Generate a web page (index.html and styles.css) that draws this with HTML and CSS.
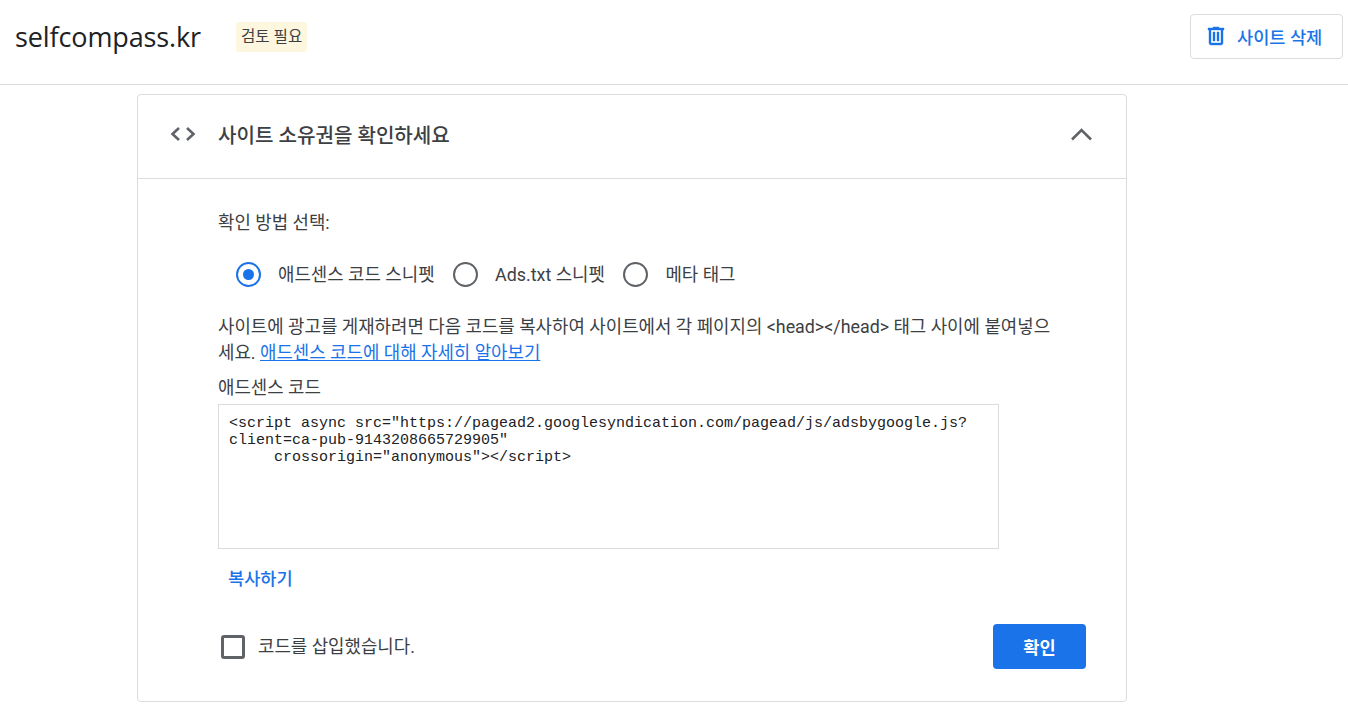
FILE: index.html
```html
<!DOCTYPE html>
<html lang="ko">
<head>
<meta charset="utf-8">
<title>selfcompass.kr</title>
<link rel="stylesheet" href="styles.css">
</head>
<body>
<header class="topbar">
  <div class="site-name">selfcompass.kr</div>
  <div class="status">검토 필요</div>
  <button class="delete-btn">
    <svg class="trash" viewBox="0 0 24 24" width="24" height="24"><path fill="#1a73e8" stroke="#1a73e8" stroke-width=".4" d="M15 4V3H9v1H4v2h1v13c0 1.1.9 2 2 2h10c1.1 0 2-.9 2-2V6h1V4h-5zm2 15H7V6h10v13zM9 8h2v9H9V8zm4 0h2v9h-2V8z"/></svg>
    <span>사이트 삭제</span>
  </button>
</header>
<main class="card">
  <div class="card-head">
    <svg class="code-icon" viewBox="0 0 28 16" width="28" height="16"><path fill="none" stroke="#5f6368" stroke-width="2.6" d="M10 2 3.500 8l6.500 6M18 2l6.500 6-6.500 6"/></svg>
    <h2 class="card-title">사이트 소유권을 확인하세요</h2>
    <svg class="chevron" viewBox="0 0 24 14" width="24" height="14"><path fill="none" stroke="#5f6368" stroke-width="2.600" d="M2 12.500 11.500 3l9.500 9.500"/></svg>
  </div>
  <div class="card-body">
    <p class="method-label">확인 방법 선택:</p>
    <div class="radios">
      <label class="radio"><span class="dot on"></span><span class="option-text">애드센스 코드 스니펫</span></label>
      <label class="radio"><span class="dot"></span><span class="option-text">Ads.txt 스니펫</span></label>
      <label class="radio"><span class="dot"></span><span class="option-text">메타 태그</span></label>
    </div>
    <p class="desc">사이트에 광고를 게재하려면 다음 코드를 복사하여 사이트에서 각 페이지의 &lt;head&gt;&lt;/head&gt; 태그 사이에 붙여넣으세요. <a href="#" class="link">애드센스 코드에 대해 자세히 알아보기</a></p>
    <div class="code-label">애드센스 코드</div>
    <pre class="code">&lt;script async src="https://pagead2.googlesyndication.com/pagead/js/adsbygoogle.js?
client=ca-pub-9143208665729905"
     crossorigin="anonymous"&gt;&lt;/script&gt;</pre>
    <button class="copy">복사하기</button>
    <div class="confirm-row">
      <label class="check"><span class="box"></span><span class="check-text">코드를 삽입했습니다.</span></label>
      <button class="confirm">확인</button>
    </div>
  </div>
</main>
</body>
</html>
```
FILE: styles.css
```css
* { box-sizing: border-box; }
html, body { margin: 0; height: 710px; overflow: hidden; background: #fff; }
body { font-family: Roboto, "Noto Sans CJK KR", sans-serif; color: #3c4043; }
.topbar { display: flex; align-items: center; height: 85px; border-bottom: 1px solid #dadce0; padding: 0 5px 11px 15px; }
.site-name { font-family: "Open Sans", Roboto, sans-serif; font-size: 27px; letter-spacing: -0.12px; color: #202124; width: 221px; }
.status { background: #fef7e0; border-radius: 3px; height: 30px; padding: 0 5px; font-size: 15.600px; line-height: 30px; color: #3c4043; }
.delete-btn { margin-left: auto; display: flex; align-items: center; width: 153px; height: 45px; padding: 0 0 0 13px; background: #fff; border: 1px solid #dadce0; border-radius: 4px; color: #1a73e8; font: 500 17.600px Roboto, "Noto Sans CJK KR", sans-serif; }
.trash { margin: 0 9px 2px 0; }
.card { width: 990px; height: 608px; margin: 9px 0 0 137px; border: 1px solid #dadce0; border-radius: 4px; }
.card-head { display: flex; align-items: center; height: 84px; padding: 0 32px 6px 31px; border-bottom: 1px solid #dadce0; }
.card-title { margin: 0 0 0 21px; padding-top: 2px; font-size: 20.100px; font-weight: 500; color: #3c4043; flex: 1; }
.chevron { margin-left: -2px; }
.card-body { padding: 32px 0 0 80px; position: relative; }
.method-label { margin: 0; font-size: 17.850px; line-height: 24px; }
.radios { display: flex; margin: 26px 0 0 18px; height: 26px; align-items: center; }
.radio { display: flex; align-items: center; font-size: 17.850px; margin-right: 18.500px; }
.option-text { padding-bottom: 2px; }
.dot { width: 25px; height: 25px; border: 2px solid #5f6368; border-radius: 50%; margin-right: 17px; display: flex; align-items: center; justify-content: center; }
.dot.on { border-color: #1a73e8; }
.dot.on::after { content: ""; width: 11px; height: 11px; border-radius: 50%; background: #1a73e8; }
.desc { margin: 27px 0 0; width: 840px; font-size: 17.850px; line-height: 26px; }
.link { color: #1a73e8; }
.code-label { margin-top: 10px; font-size: 17.850px; line-height: 24px; }
.code { margin: 4px 0 0; width: 781px; height: 145px; border: 1px solid #dadce0; padding: 10px; font: 15px/17px "Liberation Mono", monospace; color: #202124; white-space: pre-wrap; }
.copy { display: block; margin: 18px 0 0 10px; padding: 0; border: 0; background: none; color: #1a73e8; font: 500 17.600px/24px Roboto, "Noto Sans CJK KR", sans-serif; }
.confirm-row { display: flex; align-items: center; justify-content: space-between; margin-top: 33px; width: 868px; height: 45px; padding-left: 3px; }
.check { display: flex; align-items: center; font-size: 17.850px; }
.check-text { padding-bottom: 4px; }
.box { width: 24px; height: 24px; border: 3px solid #5f6368; border-radius: 3px; margin-right: 13px; }
.confirm { width: 93px; height: 45px; border: 0; border-radius: 4px; background: #1a73e8; color: #fff; font: 700 17.600px Roboto, "Noto Sans CJK KR", sans-serif; }
```
